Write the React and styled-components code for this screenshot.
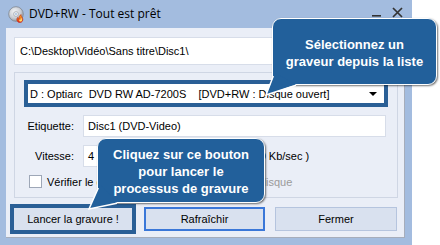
import React from 'react';
import styled, { createGlobalStyle } from 'styled-components';

const Global = createGlobalStyle`
  html, body { margin: 0; padding: 0; background: #ffffff; }
  body {
    width: 440px; height: 245px; overflow: hidden;
    font-family: "Liberation Sans", Arial, sans-serif;
    font-size: 11px; color: #000;
  }
  * { box-sizing: border-box; }
`;

const Stage = styled.div`
  position: relative;
  width: 440px;
  height: 245px;
`;

const Window = styled.div`
  width: 412px;
  height: 245px;
  background: #a3bcdf;
  display: flex;
  flex-direction: column;
`;

const TitleBar = styled.div`
  height: 28px;
  display: flex;
  align-items: center;
  padding: 0 8px 0 8px;
  gap: 4px;
`;

const Title = styled.div`
  flex: 1;
  font-family: "Open Sans", "Noto Sans", sans-serif;
  font-size: 12px;
  color: #000;
  line-height: 28px;
`;

const TitleButtons = styled.div`
  display: flex;
  align-items: center;
  gap: 10px;
  margin-right: 1px;
  margin-top: -4px;
`;

const Client = styled.div`
  flex: 1;
  margin: 0 7px 7px 6px;
  background: #eaeef7;
  border-right: 1px solid #a6adbb;
  border-bottom: 1px solid #a6adbb;
  padding: 9px 6px 0 8px;
  display: flex;
  flex-direction: column;
`;

const PathField = styled.div`
  height: 28px;
  background: #fff;
  border: 1px solid #d7dde9;
  padding-left: 5px;
  display: flex;
  align-items: center;
`;

const GroupBox = styled.div`
  margin-top: 7px;
  border: 1px solid #cfd6e4;
  padding: 7px 9px 9px 9px;
  display: flex;
  flex-direction: column;
`;

const DriveSelect = styled.div`
  height: 27px;
  border: 4px solid #2a5f96;
  background: #fff;
  display: flex;
  align-items: center;
  padding: 0 6px 0 2px;
  white-space: pre;
`;

const SelectText = styled.span`
  flex: 1;
`;

const Arrow = styled.span`
  width: 0;
  height: 0;
  border-left: 4px solid transparent;
  border-right: 4px solid transparent;
  border-top: 4px solid #000;
  margin-right: 1px;
`;

const FormRow = styled.div`
  margin-top: 8px;
  display: grid;
  grid-template-columns: 50px auto 1fr;
  column-gap: 9px;
  align-items: center;
`;

const Label = styled.span`
  text-align: right;
  color: #000;
`;

const Field = styled.div`
  height: 22px;
  background: #fff;
  border: 1px solid #d7dde9;
  padding-left: 4px;
  display: flex;
  align-items: center;
  width: ${p => p.$width}px;
`;

const SpeedWrap = styled.div`
  display: flex;
  align-items: center;
  gap: 8px;
`;

const CheckRow = styled.div`
  margin-top: 8px;
  display: flex;
  align-items: center;
  padding-left: 5px;
`;

const Check = styled.span`
  width: 13px;
  height: 13px;
  background: #fff;
  border: 1px solid #9ea7b7;
  margin-right: 5px;
`;

const CheckLabel = styled.span`
  color: ${p => (p.$disabled ? '#9a9a9a' : '#000')};
  margin-right: ${p => p.$gap || 0}px;
`;

const ButtonRow = styled.div`
  margin-top: 9px;
  margin-left: -1px;
  display: grid;
  grid-template-columns: 121px 121px 122px;
  column-gap: 10px;
`;

const Button = styled.div`
  height: 24px;
  background: #d9e1ef;
  display: flex;
  align-items: center;
  justify-content: center;
  border: ${p => (p.$variant === 'focus' ? '2px solid #3a77d8' : p.$variant === 'highlight' ? '1px solid #2a5f96' : '1px solid #b5c4de')};
  box-shadow: ${p => (p.$variant === 'highlight' ? '0 0 0 3px #2a5f96' : 'none')};
  margin-right: ${p => (p.$variant === 'highlight' ? '1px' : '0')};
`;

const Callout = styled.div`
  position: absolute;
  left: ${p => p.$x}px;
  top: ${p => p.$y}px;
  width: ${p => p.$w}px;
  height: ${p => p.$h}px;
  background: #22609b;
  border: 1.5px solid #ffffff;
  border-radius: 9px;
  box-shadow: 1px 1px 2px rgba(0, 0, 0, 0.55);
  display: flex;
  align-items: center;
  justify-content: center;
  padding-top: ${p => p.$pt || 0}px;
`;

const Tail = styled.svg`
  position: absolute;
  left: -1.5px;
  top: -1.5px;
  overflow: visible;
`;

const CalloutText = styled.div`
  position: relative;
  color: #fff;
  font-family: "Liberation Sans", Arial, sans-serif;
  font-weight: bold;
  font-size: 13px;
  line-height: 17px;
  text-align: center;
`;

const DiscIcon = () => (
  <svg width="17" height="17" viewBox="0 0 17 17">
    <defs>
      <radialGradient id="dg" cx="0.4" cy="0.35" r="0.7">
        <stop offset="0" stopColor="#f4f5f7" />
        <stop offset="0.6" stopColor="#c9cdd4" />
        <stop offset="1" stopColor="#8d939d" />
      </radialGradient>
      <linearGradient id="fl" x1="0" y1="0" x2="0" y2="1">
        <stop offset="0" stopColor="#ffb020" />
        <stop offset="1" stopColor="#e0261a" />
      </linearGradient>
    </defs>
    <circle cx="8" cy="8" r="7.3" fill="url(#dg)" stroke="#7f8791" strokeWidth="0.8" />
    <circle cx="8" cy="8" r="2.4" fill="#eef0f3" stroke="#9aa0a8" strokeWidth="0.7" />
    <circle cx="8" cy="8" r="0.9" fill="#a3bcdf" />
    <path d="M12 16.5 C8.6 16.3 8.2 13 9.6 11.4 C9.8 12.6 10.4 13 10.9 12.8 C10.4 11 11.6 9.2 13.2 8.6 C12.8 10.2 14.2 10.8 14.6 12.2 C15.4 14.4 14.2 16.4 12 16.5 Z" fill="url(#fl)" stroke="#b51d10" strokeWidth="0.5" />
    <path d="M12.2 15.6 C11 15.4 10.9 14 11.7 13.2 C11.9 13.8 12.4 13.9 12.6 13.5 C12.5 12.6 13 12 13.5 11.8 C13.5 12.8 14.2 13.4 14 14.4 C13.8 15.2 13 15.6 12.2 15.6 Z" fill="#ffe16a" />
  </svg>
);

const MinIcon = () => (
  <svg width="10" height="10" viewBox="0 0 10 10">
    <rect x="0" y="8" width="9" height="1.6" fill="#333" />
  </svg>
);

const CloseIcon = () => (
  <svg width="11" height="11" viewBox="0 0 11 11">
    <path d="M1 1 L10 10 M10 1 L1 10" stroke="#333" strokeWidth="1.7" />
  </svg>
);

export default function App() {
  return (
    <Stage>
      <Global />
      <Window>
        <TitleBar>
          <DiscIcon />
          <Title>DVD+RW - Tout est prêt</Title>
          <TitleButtons>
            <MinIcon />
            <CloseIcon />
          </TitleButtons>
        </TitleBar>
        <Client>
          <PathField>C:\Desktop\Vidéo\Sans titre\Disc1\</PathField>
          <GroupBox>
            <DriveSelect>
              <SelectText>{'D : Optiarc  DVD RW AD-7200S    [DVD+RW : Disque ouvert]'}</SelectText>
              <Arrow />
            </DriveSelect>
            <FormRow>
              <Label>Etiquette:</Label>
              <Field $width={303}>Disc1 (DVD-Video)</Field>
              <span />
            </FormRow>
            <FormRow>
              <Label>Vitesse:</Label>
              <SpeedWrap>
                <Field $width={135}>4</Field>
                <span>{'x  ( 5540 Kb/sec )'}</span>
              </SpeedWrap>
              <span />
            </FormRow>
            <CheckRow>
              <Check />
              <CheckLabel $gap={82}>Vérifier le disque</CheckLabel>
              <CheckLabel $disabled>Éjecter le disque</CheckLabel>
            </CheckRow>
          </GroupBox>
          <ButtonRow>
            <Button $variant="highlight">Lancer la gravure !</Button>
            <Button $variant="focus">Rafraîchir</Button>
            <Button>Fermer</Button>
          </ButtonRow>
        </Client>
      </Window>

      <Callout $x={272} $y={18} $w={165} $h={67} $pt={3}>
        <Tail width="165" height="67">
          <path d="M3 55 L24 66.6 L-6 77 Z" fill="#22609b" />
          <path d="M1.3 58 L-6 77 L24 67.2" fill="none" stroke="#fff" strokeWidth="1.5" />
        </Tail>
        <CalloutText>
          Sélectionnez un
          <br />
          graveur depuis la liste
        </CalloutText>
      </Callout>

      <Callout $x={97} $y={138} $w={168} $h={65} $pt={2}>
        <Tail width="168" height="65">
          <path d="M3 46 L20 64.6 L-8 71 Z" fill="#22609b" />
          <path d="M1.3 50 L-8 71 L20 65.2" fill="none" stroke="#fff" strokeWidth="1.5" />
        </Tail>
        <CalloutText>
          Cliquez sur ce bouton
          <br />
          pour lancer le
          <br />
          processus de gravure
        </CalloutText>
      </Callout>
    </Stage>
  );
}
